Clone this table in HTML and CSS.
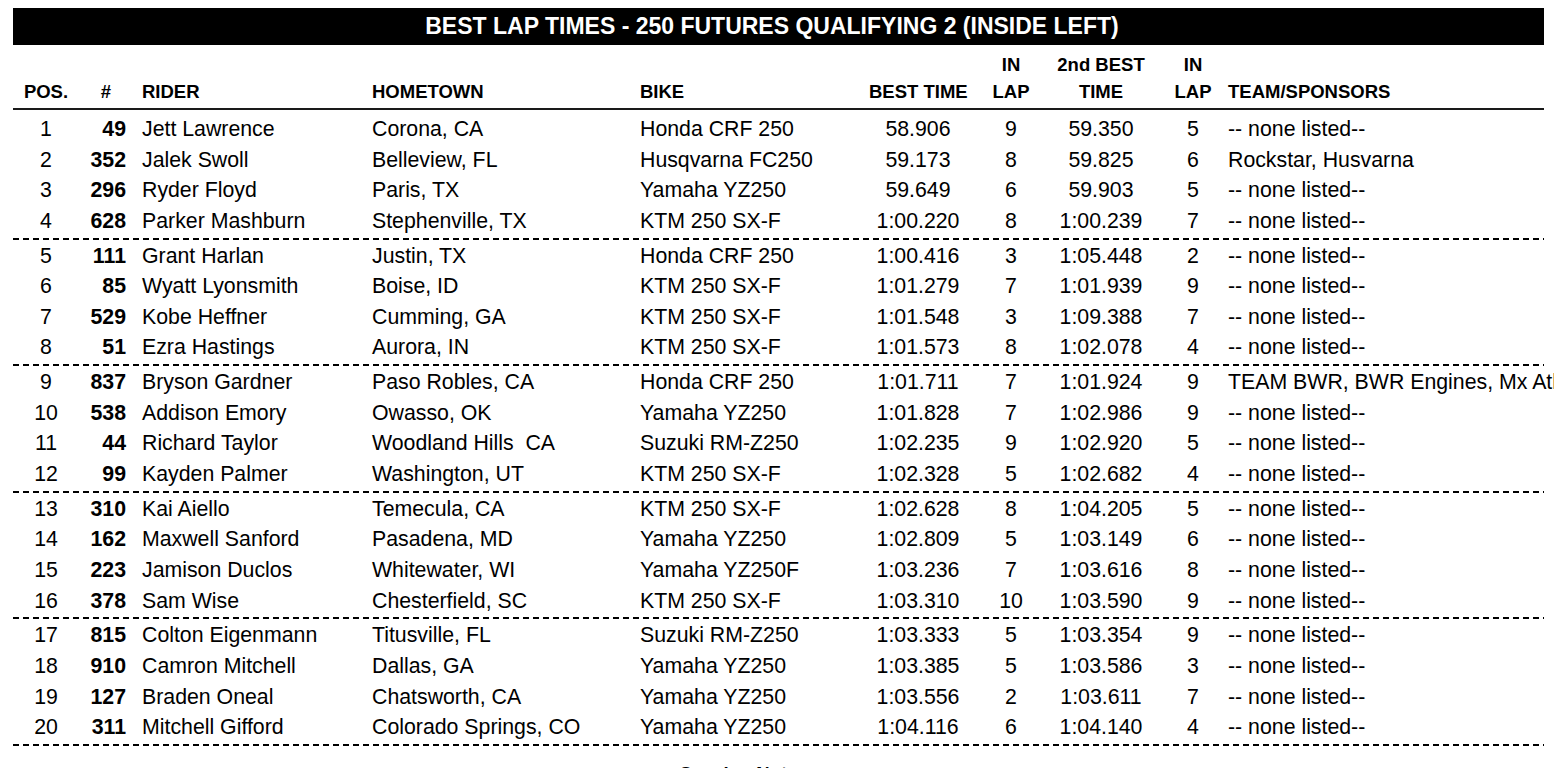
FILE: index.html
```html
<!DOCTYPE html>
<html lang="en">
<head>
<meta charset="utf-8">
<title>Best Lap Times - 250 Futures Qualifying 2 (Inside Left)</title>
<link rel="stylesheet" href="styles.css">
</head>
<body>
<div class="sheet">
  <div class="title">BEST LAP TIMES - 250 FUTURES QUALIFYING 2 (INSIDE LEFT)</div>
  <div class="row head">
    <div class="c pos">POS.</div>
    <div class="c num">#</div>
    <div class="c txt">RIDER</div>
    <div class="c txt">HOMETOWN</div>
    <div class="c txt">BIKE</div>
    <div class="c ctr">BEST TIME</div>
    <div class="c ctr">IN<br>LAP</div>
    <div class="c ctr">2nd BEST<br>TIME</div>
    <div class="c ctr lap2">IN<br>LAP</div>
    <div class="c txt">TEAM/SPONSORS</div>
  </div>

  <div class="group">
    <div class="row"><div class="c pos">1</div><div class="c num">49</div><div class="c txt">Jett Lawrence</div><div class="c txt">Corona, CA</div><div class="c txt">Honda CRF 250</div><div class="c ctr">58.906</div><div class="c ctr">9</div><div class="c ctr">59.350</div><div class="c ctr lap2">5</div><div class="c txt team">-- none listed--</div></div>
    <div class="row"><div class="c pos">2</div><div class="c num">352</div><div class="c txt">Jalek Swoll</div><div class="c txt">Belleview, FL</div><div class="c txt">Husqvarna FC250</div><div class="c ctr">59.173</div><div class="c ctr">8</div><div class="c ctr">59.825</div><div class="c ctr lap2">6</div><div class="c txt team">Rockstar, Husvarna</div></div>
    <div class="row"><div class="c pos">3</div><div class="c num">296</div><div class="c txt">Ryder Floyd</div><div class="c txt">Paris, TX</div><div class="c txt">Yamaha YZ250</div><div class="c ctr">59.649</div><div class="c ctr">6</div><div class="c ctr">59.903</div><div class="c ctr lap2">5</div><div class="c txt team">-- none listed--</div></div>
    <div class="row"><div class="c pos">4</div><div class="c num">628</div><div class="c txt">Parker Mashburn</div><div class="c txt">Stephenville, TX</div><div class="c txt">KTM 250 SX-F</div><div class="c ctr">1:00.220</div><div class="c ctr">8</div><div class="c ctr">1:00.239</div><div class="c ctr lap2">7</div><div class="c txt team">-- none listed--</div></div>
  </div>
  <div class="sep"></div>

  <div class="group">
    <div class="row"><div class="c pos">5</div><div class="c num">111</div><div class="c txt">Grant Harlan</div><div class="c txt">Justin, TX</div><div class="c txt">Honda CRF 250</div><div class="c ctr">1:00.416</div><div class="c ctr">3</div><div class="c ctr">1:05.448</div><div class="c ctr lap2">2</div><div class="c txt team">-- none listed--</div></div>
    <div class="row"><div class="c pos">6</div><div class="c num">85</div><div class="c txt">Wyatt Lyonsmith</div><div class="c txt">Boise, ID</div><div class="c txt">KTM 250 SX-F</div><div class="c ctr">1:01.279</div><div class="c ctr">7</div><div class="c ctr">1:01.939</div><div class="c ctr lap2">9</div><div class="c txt team">-- none listed--</div></div>
    <div class="row"><div class="c pos">7</div><div class="c num">529</div><div class="c txt">Kobe Heffner</div><div class="c txt">Cumming, GA</div><div class="c txt">KTM 250 SX-F</div><div class="c ctr">1:01.548</div><div class="c ctr">3</div><div class="c ctr">1:09.388</div><div class="c ctr lap2">7</div><div class="c txt team">-- none listed--</div></div>
    <div class="row"><div class="c pos">8</div><div class="c num">51</div><div class="c txt">Ezra Hastings</div><div class="c txt">Aurora, IN</div><div class="c txt">KTM 250 SX-F</div><div class="c ctr">1:01.573</div><div class="c ctr">8</div><div class="c ctr">1:02.078</div><div class="c ctr lap2">4</div><div class="c txt team">-- none listed--</div></div>
  </div>
  <div class="sep"></div>

  <div class="group">
    <div class="row"><div class="c pos">9</div><div class="c num">837</div><div class="c txt">Bryson Gardner</div><div class="c txt">Paso Robles, CA</div><div class="c txt">Honda CRF 250</div><div class="c ctr">1:01.711</div><div class="c ctr">7</div><div class="c ctr">1:01.924</div><div class="c ctr lap2">9</div><div class="c txt team">TEAM BWR, BWR Engines, Mx Athletics</div></div>
    <div class="row"><div class="c pos">10</div><div class="c num">538</div><div class="c txt">Addison Emory</div><div class="c txt">Owasso, OK</div><div class="c txt">Yamaha YZ250</div><div class="c ctr">1:01.828</div><div class="c ctr">7</div><div class="c ctr">1:02.986</div><div class="c ctr lap2">9</div><div class="c txt team">-- none listed--</div></div>
    <div class="row"><div class="c pos">11</div><div class="c num">44</div><div class="c txt">Richard Taylor</div><div class="c txt">Woodland Hills&nbsp; CA</div><div class="c txt">Suzuki RM-Z250</div><div class="c ctr">1:02.235</div><div class="c ctr">9</div><div class="c ctr">1:02.920</div><div class="c ctr lap2">5</div><div class="c txt team">-- none listed--</div></div>
    <div class="row"><div class="c pos">12</div><div class="c num">99</div><div class="c txt">Kayden Palmer</div><div class="c txt">Washington, UT</div><div class="c txt">KTM 250 SX-F</div><div class="c ctr">1:02.328</div><div class="c ctr">5</div><div class="c ctr">1:02.682</div><div class="c ctr lap2">4</div><div class="c txt team">-- none listed--</div></div>
  </div>
  <div class="sep"></div>

  <div class="group">
    <div class="row"><div class="c pos">13</div><div class="c num">310</div><div class="c txt">Kai Aiello</div><div class="c txt">Temecula, CA</div><div class="c txt">KTM 250 SX-F</div><div class="c ctr">1:02.628</div><div class="c ctr">8</div><div class="c ctr">1:04.205</div><div class="c ctr lap2">5</div><div class="c txt team">-- none listed--</div></div>
    <div class="row"><div class="c pos">14</div><div class="c num">162</div><div class="c txt">Maxwell Sanford</div><div class="c txt">Pasadena, MD</div><div class="c txt">Yamaha YZ250</div><div class="c ctr">1:02.809</div><div class="c ctr">5</div><div class="c ctr">1:03.149</div><div class="c ctr lap2">6</div><div class="c txt team">-- none listed--</div></div>
    <div class="row"><div class="c pos">15</div><div class="c num">223</div><div class="c txt">Jamison Duclos</div><div class="c txt">Whitewater, WI</div><div class="c txt">Yamaha YZ250F</div><div class="c ctr">1:03.236</div><div class="c ctr">7</div><div class="c ctr">1:03.616</div><div class="c ctr lap2">8</div><div class="c txt team">-- none listed--</div></div>
    <div class="row"><div class="c pos">16</div><div class="c num">378</div><div class="c txt">Sam Wise</div><div class="c txt">Chesterfield, SC</div><div class="c txt">KTM 250 SX-F</div><div class="c ctr">1:03.310</div><div class="c ctr">10</div><div class="c ctr">1:03.590</div><div class="c ctr lap2">9</div><div class="c txt team">-- none listed--</div></div>
  </div>
  <div class="sep"></div>

  <div class="group">
    <div class="row"><div class="c pos">17</div><div class="c num">815</div><div class="c txt">Colton Eigenmann</div><div class="c txt">Titusville, FL</div><div class="c txt">Suzuki RM-Z250</div><div class="c ctr">1:03.333</div><div class="c ctr">5</div><div class="c ctr">1:03.354</div><div class="c ctr lap2">9</div><div class="c txt team">-- none listed--</div></div>
    <div class="row"><div class="c pos">18</div><div class="c num">910</div><div class="c txt">Camron Mitchell</div><div class="c txt">Dallas, GA</div><div class="c txt">Yamaha YZ250</div><div class="c ctr">1:03.385</div><div class="c ctr">5</div><div class="c ctr">1:03.586</div><div class="c ctr lap2">3</div><div class="c txt team">-- none listed--</div></div>
    <div class="row"><div class="c pos">19</div><div class="c num">127</div><div class="c txt">Braden Oneal</div><div class="c txt">Chatsworth, CA</div><div class="c txt">Yamaha YZ250</div><div class="c ctr">1:03.556</div><div class="c ctr">2</div><div class="c ctr">1:03.611</div><div class="c ctr lap2">7</div><div class="c txt team">-- none listed--</div></div>
    <div class="row"><div class="c pos">20</div><div class="c num">311</div><div class="c txt">Mitchell Gifford</div><div class="c txt">Colorado Springs, CO</div><div class="c txt">Yamaha YZ250</div><div class="c ctr">1:04.116</div><div class="c ctr">6</div><div class="c ctr">1:04.140</div><div class="c ctr lap2">4</div><div class="c txt team">-- none listed--</div></div>
  </div>
  <div class="sep"></div>

  <div class="notes">Session Notes:</div>
</div>
</body>
</html>
```

FILE: styles.css
```css
html, body {
  margin: 0;
  padding: 0;
  overflow: hidden;
  background: #fff;
}

body {
  padding: 8px 0 0 13px;
  font-family: "Liberation Sans", Arial, sans-serif;
  color: #000;
}

.sheet {
  width: 1531px;
}

.title {
  height: 37px;
  line-height: 37px;
  background: #000;
  color: #fff;
  font-weight: bold;
  font-size: 23px;
  text-align: center;
  padding-right: 13px;
  white-space: nowrap;
}

.row {
  display: grid;
  grid-template-columns: 66px 63px 230px 268px 229px 98px 88px 92px 81px 316px;
  font-size: 21.3px;
  line-height: 30.65px;
  height: 30.65px;
  white-space: nowrap;
}

.row.head {
  height: auto;
  font-size: 18.5px;
  font-weight: bold;
  line-height: 27px;
  padding-top: 6px;
  padding-bottom: 3px;
  border-bottom: 2px solid #1a1a1a;
  align-items: end;
}

.group {
  padding-top: 4px;
}

.group + .sep + .group {
  padding-top: 0;
}

.pos {
  text-align: center;
}

.num {
  text-align: right;
  padding-right: 16px;
  font-weight: bold;
}

.head .num {
  padding-right: 31px;
}

.txt {
  text-align: left;
}

.ctr {
  text-align: center;
}

.lap2 {
  padding-left: 11px;
}

.sep {
  height: 2px;
  margin: 1px 0;
  background: repeating-linear-gradient(to right, #000 0, #000 6px, transparent 6px, transparent 10px);
}

.notes {
  margin-top: 16px;
  padding-right: 66px;
  text-align: center;
  font-weight: bold;
  font-style: italic;
  font-size: 18.5px;
  line-height: 24px;
}
```
